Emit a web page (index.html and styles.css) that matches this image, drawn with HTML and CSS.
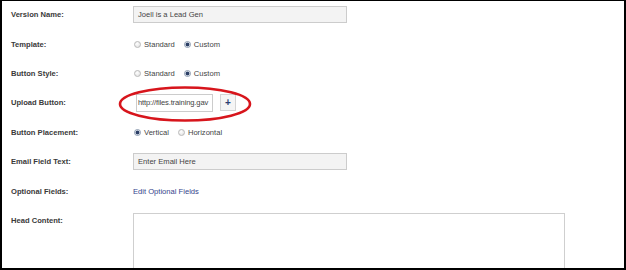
FILE: index.html
```html
<!DOCTYPE html>
<html lang="en">
<head>
    <meta charset="UTF-8">
    <meta name="viewport" content="width=device-width, initial-scale=1.0">
    <title>Version Settings</title>
    <link rel="stylesheet" href="styles.css">
</head>
<body>

    <div class="frame">
        <div class="form">
            <div class="row">
                <div class="label">Version Name:</div>
                <div class="field field-wide">Joell is a Lead Gen</div>
            </div>
            <div class="row">
                <div class="label">Template:</div>
                <span class="opt"><span class="radio"></span>Standard</span>
                <span class="opt"><span class="radio checked"></span>Custom</span>
            </div>
            <div class="row">
                <div class="label">Button Style:</div>
                <span class="opt"><span class="radio"></span>Standard</span>
                <span class="opt"><span class="radio checked"></span>Custom</span>
            </div>
            <div class="row">
                <div class="label">Upload Button:</div>
                <div class="field field-upload">http://files.training.gav</div>
                <button class="plus-btn">+</button>
            </div>
            <div class="row">
                <div class="label">Button Placement:</div>
                <span class="opt"><span class="radio checked"></span>Vertical</span>
                <span class="opt"><span class="radio"></span>Horizontal</span>
            </div>
            <div class="row">
                <div class="label">Email Field Text:</div>
                <div class="field field-wide">Enter Email Here</div>
            </div>
            <div class="row">
                <div class="label">Optional Fields:</div>
                <a class="link" href="#">Edit Optional Fields</a>
            </div>
            <div class="row row-top">
                <div class="label">Head Content:</div>
                <div class="head-content"></div>
            </div>
        </div>

        <!-- callout drawn round the upload field -->
        <svg class="callout" width="136" height="38" viewBox="0 0 136 38">
            <ellipse cx="68" cy="19" rx="65" ry="16.5" fill="none" stroke="#d7151c" stroke-width="2.6"/>
        </svg>
    </div>

</body>
</html>
```

FILE: styles.css
```css
body {
    margin: 0;
    padding: 0;
    background: #ffffff;
    font-family: "Liberation Sans", Arial, sans-serif;
    font-size: 7.6px;
    color: #444444;
}

.frame {
    position: relative;
    box-sizing: border-box;
    width: 626px;
    height: 270px;
    border-top: 1px solid #000000;
    border-left: 2px solid #000000;
    border-right: 2px solid #000000;
    border-bottom: 2px solid #000000;
    overflow: hidden;
    background: #ffffff;
}

.form {
    margin-top: -1px;
    padding-left: 9px;
}

.row {
    display: flex;
    align-items: center;
    height: 29.4px;
}

.row-top {
    align-items: flex-start;
    height: 80px;
}

.label {
    width: 122px;
    flex-shrink: 0;
    font-weight: bold;
    color: #3a3a3a;
}

.row-top .label {
    padding-top: 10px;
}

.field {
    box-sizing: border-box;
    display: flex;
    align-items: center;
    padding: 0 4px;
    border: 1px solid #cccccc;
    background: #f3f3f3;
    color: #444444;
    white-space: nowrap;
}

.field-wide {
    width: 214px;
    height: 17px;
}

.field-upload {
    width: 77px;
    height: 18px;
    margin-left: 3px;
    padding: 0 1px;
    background: #ffffff;
    letter-spacing: -0.15px;
}

.plus-btn {
    box-sizing: border-box;
    width: 16px;
    height: 17px;
    margin: 0 0 0 7px;
    padding: 0;
    border: 1px solid #d4d4d4;
    background: #f5f5f5;
    color: #2b3f73;
    font-family: inherit;
    font-size: 10px;
    font-weight: bold;
    line-height: 15px;
    cursor: pointer;
}

.opt {
    display: inline-flex;
    align-items: center;
    gap: 3px;
    margin-left: 1px;
    margin-right: 8px;
}

.radio {
    box-sizing: border-box;
    display: inline-block;
    width: 7px;
    height: 7px;
    border-radius: 50%;
    border: 1px solid #b9b9b9;
    background: radial-gradient(circle at 40% 35%, #ffffff 0, #dcdcdc 100%);
}

.radio.checked {
    border-color: #8d9bb0;
    background: radial-gradient(circle, #2c3f66 0, #2c3f66 1.6px, #dfe5ec 2.2px);
}

.link {
    color: #34448c;
    text-decoration: none;
}

.head-content {
    box-sizing: border-box;
    width: 432px;
    height: 80px;
    margin-top: 7px;
    border: 1px solid #cfcfcf;
    background: #ffffff;
}

.callout {
    position: absolute;
    left: 115px;
    top: 84px;
}
```
